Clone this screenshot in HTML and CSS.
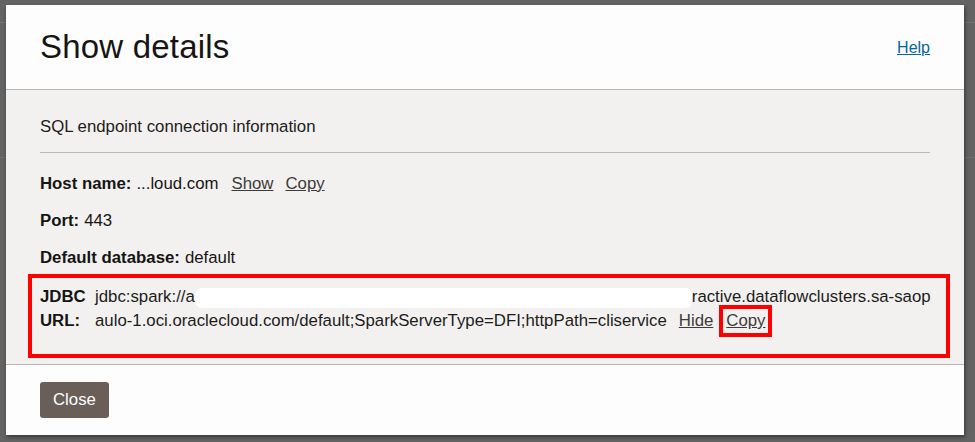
FILE: index.html
```html
<!DOCTYPE html>
<html lang="en">
<head>
<meta charset="utf-8">
<title>Show details</title>
<link rel="stylesheet" href="styles.css">
</head>
<body>
<div class="backdrop">
  <div class="modal">
    <header class="modal-header">
      <h1 class="modal-title">Show details</h1>
      <a class="help-link" href="#">Help</a>
    </header>
    <section class="modal-body">
      <div class="section-title">SQL endpoint connection information</div>
      <div class="fields">
        <div class="field">
          <span class="label">Host name:</span>
          <span class="value">...loud.com</span>
          <a class="action" href="#">Show</a>
          <a class="action" href="#">Copy</a>
        </div>
        <div class="field">
          <span class="label">Port:</span>
          <span class="value">443</span>
        </div>
        <div class="field">
          <span class="label">Default database:</span>
          <span class="value">default</span>
        </div>
      </div>
      <div class="highlight">
        <div class="jdbc">
          <span class="jdbc-label">JDBC URL:</span>
          <div class="jdbc-value">jdbc:spark://a<span class="redacted"></span>ractive.dataflowclusters.sa-saop<br>aulo-1.oci.oraclecloud.com/default;SparkServerType=DFI;httpPath=cliservice<a class="action first" href="#">Hide</a><span class="mark"><a class="action" href="#">Copy</a></span></div>
        </div>
      </div>
    </section>
    <footer class="modal-footer">
      <button class="btn-close" type="button">Close</button>
    </footer>
  </div>
</div>
</body>
</html>
```

FILE: styles.css
```css
* { box-sizing: border-box; }

html, body {
  margin: 0;
  padding: 0;
  height: 100%;
}

body {
  font-family: "Liberation Sans", Arial, sans-serif;
  color: #161513;
  font-size: 16.8px;
}

.backdrop {
  height: 442px;
  padding: 5px 11px 0 6px;
  background-color: #636363;
  background-image:
    linear-gradient(#727272, #727272),
    linear-gradient(#6e6e6e, #6e6e6e);
  background-size: 100% 1px, 100% 1px;
  background-position: 0 22px, 0 157px;
  background-repeat: no-repeat;
}

.modal {
  width: 958px;
  height: 430px;
  display: flex;
  flex-direction: column;
  background: #fcfcfc;
  box-shadow: 1px 2px 4px rgba(0, 0, 0, 0.45);
}

.modal-header {
  height: 85px;
  flex: none;
  display: flex;
  align-items: center;
  justify-content: space-between;
  padding: 0 34px;
  background: #fdfdfd;
  border-bottom: 1px solid #b9b6b3;
}

.modal-title {
  margin: 0;
  font-size: 33px;
  font-weight: normal;
  letter-spacing: 0.2px;
  color: #161513;
}

.help-link {
  color: #04679b;
  font-size: 16px;
  text-decoration: underline;
  margin-top: 2px;
}

.modal-body {
  flex: none;
  height: 275px;
  background: #f2f1f0;
  padding: 27px 34px 0;
  border-bottom: 1px solid #b9b6b3;
}

.section-title {
  line-height: 20px;
  padding-bottom: 15px;
  border-bottom: 1px solid #bcb8b4;
  color: #1d1c1a;
}

.fields {
  display: flex;
  flex-direction: column;
  gap: 17px;
  padding-top: 21px;
}

.field {
  line-height: 20px;
  display: flex;
  align-items: baseline;
}

.label {
  font-weight: bold;
  margin-right: 5px;
}

.value {
  margin-right: 13px;
}

.action {
  color: #3d3b39;
  text-decoration: underline;
  margin-right: 12px;
}

.highlight {
  margin: 6px -20px 0 -12px;
  border: 4px solid #ff0000;
  padding: 7px 8px 21px 8px;
}

.jdbc {
  display: grid;
  grid-template-columns: 45px 1fr;
  column-gap: 10px;
  line-height: 24px;
}

.jdbc-label {
  font-weight: bold;
}

.jdbc-value {
  white-space: nowrap;
  color: #1d1c1a;
}

.redacted {
  display: inline-block;
  width: 497px;
  height: 20px;
  background: #ffffff;
  border-radius: 7px;
  vertical-align: -6px;
}

.action.first {
  margin-left: 12px;
  margin-right: 6px;
}

.mark {
  display: inline-block;
  border: 4px solid #ff0000;
  padding: 0 3px;
  margin: -4px 0;
  line-height: 24px;
}

.mark .action {
  margin-right: 0;
}

.modal-footer {
  flex: 1;
  background: #fdfdfd;
  padding: 17px 34px 0;
}

.btn-close {
  height: 36px;
  padding: 0 13px;
  border: none;
  border-radius: 3px;
  background: #695e58;
  color: #ffffff;
  font-family: "Liberation Sans", Arial, sans-serif;
  font-size: 16.8px;
}
```
